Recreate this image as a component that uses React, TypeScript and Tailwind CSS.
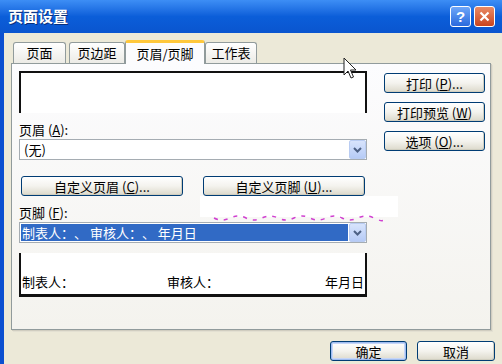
import React from "react";

const F = { fontFamily: '"Noto Sans CJK SC", "Noto Sans", sans-serif' };

function Btn({ children, w, def }: { children: React.ReactNode; w: string; def?: boolean }) {
  return (
    <div
      className={`${w} h-[20px] flex items-center justify-center rounded-[3px] border border-[#003c74] bg-gradient-to-b from-white via-[#f4f3ee] to-[#dcd9cb] text-[13px] text-black leading-none ${def ? "shadow-[inset_0_0_0_1px_#9fbcf0,inset_0_0_0_2px_#c6d6f7]" : "shadow-[inset_-1px_-1px_0_#d0cec0]"}`}
    >
      {children}
    </div>
  );
}

function Chevron() {
  return (
    <div className="w-[17px] h-[19px] rounded-[2px] bg-gradient-to-b from-[#d8e4fc] to-[#b6cbf6] border border-[#b9ccf2] flex items-center justify-center">
      <svg width="9" height="6" viewBox="0 0 9 6">
        <path d="M1 1 L4.5 4.5 L8 1" stroke="#4d6185" strokeWidth="2" fill="none" />
      </svg>
    </div>
  );
}

export default function App() {
  return (
    <div className="relative w-[502px] h-[364px] flex flex-col overflow-hidden bg-[#ece9d8] [text-spacing-trim:space-all]" style={F}>
      {/* Title bar */}
      <div className="h-[33px] flex items-center justify-between pl-[8px] pr-[7px] bg-gradient-to-b from-[#3d8ef5] via-[#0b5ed9] to-[#0a55cf]">
        <span className="text-white font-bold text-[15px] [text-shadow:1px_1px_0_#0a2f7a]">页面设置</span>
        <div className="flex gap-[3px]">
          <div className="w-[21px] h-[21px] rounded-[3px] border border-white bg-gradient-to-b from-[#6ea6f8] to-[#2a69dd] flex items-center justify-center text-white font-bold text-[15px] leading-none" style={{ fontFamily: '"Liberation Sans", sans-serif' }}>
            ?
          </div>
          <div className="w-[21px] h-[21px] rounded-[3px] border border-white bg-gradient-to-b from-[#e98a64] to-[#c9431c] flex items-center justify-center">
            <svg width="11" height="11" viewBox="0 0 11 11">
              <path d="M1.5 1.5 L9.5 9.5 M9.5 1.5 L1.5 9.5" stroke="white" strokeWidth="2.2" />
            </svg>
          </div>
        </div>
      </div>

      {/* Body */}
      <div className="flex-1 flex flex-col border-l-[4px] border-[#0b4fd0] pl-[7px] pr-[7px]">
        {/* Tabs */}
        <div className="h-[22px] mt-[8px] flex items-end ml-[2px] relative z-10">
          <div className="w-[53px] h-[21px] mr-[3px] border border-b-0 border-[#919b9c] rounded-t-[3px] bg-gradient-to-b from-white to-[#ecebe6] flex items-center justify-center text-[13px]">页面</div>
          <div className="w-[56px] h-[21px] border border-b-0 border-[#919b9c] rounded-t-[3px] bg-gradient-to-b from-white to-[#ecebe6] flex items-center justify-center text-[13px]">页边距</div>
          <div className="w-[80px] h-[24px] -mb-[1px] border border-b-0 border-[#919b9c] border-t-[3px] border-t-[#ffc83c] rounded-t-[3px] bg-[#fcfcfe] flex items-center justify-center text-[13px]">页眉/页脚</div>
          <div className="w-[52px] h-[21px] border border-b-0 border-[#919b9c] rounded-t-[3px] bg-gradient-to-b from-white to-[#ecebe6] flex items-center justify-center text-[13px]">工作表</div>
        </div>

        {/* Panel */}
        <div className="w-[480px] h-[267px] border border-[#919b9c] bg-gradient-to-b from-[#fcfcfe] to-[#f4f3ee] shadow-[1px_1px_0_#d0cdc0,2px_2px_0_#e3e0d2] flex">
          <div className="ml-[7px] w-[348px] pt-[7px] flex flex-col">
            <div className="h-[42px] bg-white border-[#111] border-l-[2px] border-t-[2px] border-r-[2px]" />
            <div className="mt-[10px] h-[14px] text-[13px] leading-[14px]">页眉 (<span className="underline">A</span>):</div>
            <div className="mt-[2px] h-[21px] bg-white border border-[#a5acb2] flex items-center justify-between pl-[4px]">
              <span className="text-[13px]">(无)</span>
              <Chevron />
            </div>
            <div className="mt-[16px] flex gap-[20px] pl-[2px]">
              <Btn w="w-[162px]">自定义页眉 (<span className="underline">C</span>)...</Btn>
              <Btn w="w-[162px]">自定义页脚 (<span className="underline">U</span>)...</Btn>
            </div>
            <div className="mt-[10px] h-[14px] text-[13px] leading-[14px]">页脚 (<span className="underline">F</span>):</div>
            <div className="mt-[2px] h-[21px] bg-white border border-[#a5acb2] flex items-center justify-between pl-[1px]">
              <div className="flex-1 h-[17px] bg-[#316ac5] text-white text-[13px] leading-[17px] pl-[1px] mr-[1px] whitespace-pre">制表人：、 审核人：、 年月日</div>
              <Chevron />
            </div>
            <div className="mt-[10px] h-[44px] bg-white border-l-[2px] border-r-[2px] border-b-[3px] border-[#111] flex items-end justify-between pb-[6px] px-[1px] text-[13px] leading-none">
              <span className="w-[145px]">制表人：</span>
              <span className="flex-1">审核人：</span>
              <span>年月日</span>
            </div>
          </div>
          <div className="ml-[17px] pt-[9px] flex flex-col gap-[9px]">
            <Btn w="w-[101px]">打印 (<span className="underline">P</span>)...</Btn>
            <Btn w="w-[101px]">打印预览 (<span className="underline">W</span>)</Btn>
            <Btn w="w-[101px]">选项 (<span className="underline">O</span>)...</Btn>
          </div>
        </div>

        {/* Bottom buttons */}
        <div className="mt-[11px] flex justify-end gap-[10px]">
          <Btn w="w-[77px]" def>确定</Btn>
          <Btn w="w-[78px]">取消</Btn>
        </div>
      </div>

      {/* Occluding white patch */}
      <div className="absolute left-[200px] top-[196px] w-[198px] h-[21px] bg-white" />
      <svg className="absolute left-[212px] top-[214px]" width="175" height="10" viewBox="0 0 175 10">
        <path d="M2 4 Q10 8 18 4 T34 4 T50 4 T66 4 T82 4 T98 4 T114 4 T130 4 T146 4 T162 4 T172 6" stroke="#d040d0" strokeWidth="1.5" strokeDasharray="4 6" fill="none" />
      </svg>

      {/* Mouse cursor */}
      <svg className="absolute left-[343px] top-[57px]" width="16" height="24" viewBox="0 0 16 24">
        <path d="M1 1 L1 18 L5 14 L8 21 L10.5 20 L7.5 13 L13 13 Z" fill="white" stroke="#222" strokeWidth="1" strokeLinejoin="round" />
      </svg>
    </div>
  );
}
